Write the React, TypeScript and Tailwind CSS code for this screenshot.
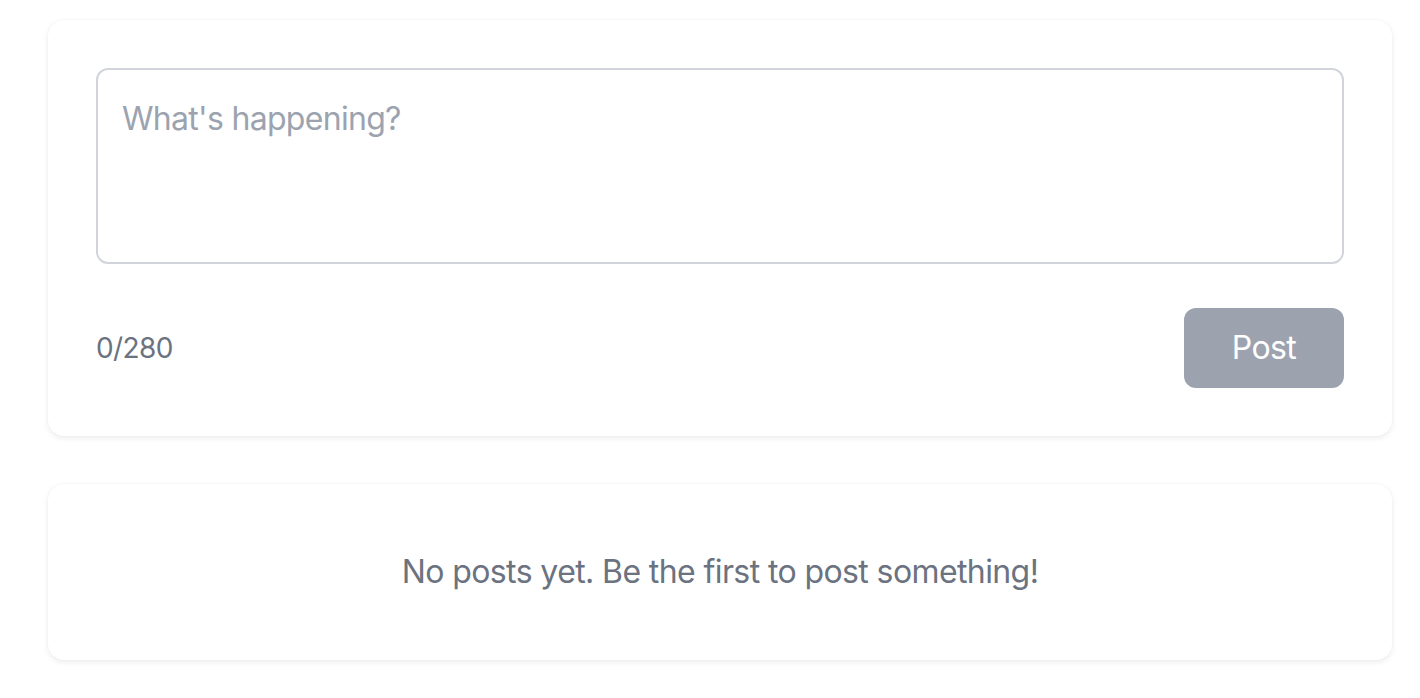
import React, { useState } from 'react';

const MAX = 280;

export default function App() {
  const [text, setText] = useState('');

  return (
    <div className="min-h-screen bg-white pt-[20px] pl-[48px] tracking-[-0.6px]" style={{ fontFamily: 'Inter, "Noto Sans", sans-serif' }}>
      <div className="w-[1344px] flex flex-col gap-[48px]">
        {/* Composer */}
        <div className="bg-white rounded-[16px] p-[48px] shadow-[0_2px_6px_rgba(0,0,0,0.08),0_0_2px_rgba(0,0,0,0.04)]">
          <textarea
            rows={3}
            value={text}
            onChange={e => setText(e.target.value.slice(0, MAX))}
            placeholder="What's happening?"
            className="block w-full h-[196px] resize-none rounded-[12px] border-2 border-[#d1d5db] px-[24px] pt-[25px] pb-[23px] text-[32px] leading-[48px] tracking-[-0.7px] text-gray-700 placeholder:text-[#9ca3af] focus:outline-none"
          />
          <div className="mt-[44px] flex items-center justify-between">
            <span className="text-[28px] text-[#6b7280]">{text.length}/{MAX}</span>
            <button
              disabled={text.length === 0}
              className="w-[160px] h-[80px] rounded-[12px] bg-[#9ca3af] text-white text-[32px]"
            >
              Post
            </button>
          </div>
        </div>

        {/* Feed */}
        <div className="bg-white rounded-[16px] p-[64px] shadow-[0_2px_6px_rgba(0,0,0,0.08),0_0_2px_rgba(0,0,0,0.04)]">
          <p className="text-center text-[32px] leading-[48px] text-[#6b7280]">
            No posts yet. Be the first to post something!
          </p>
        </div>
      </div>
    </div>
  );
}
